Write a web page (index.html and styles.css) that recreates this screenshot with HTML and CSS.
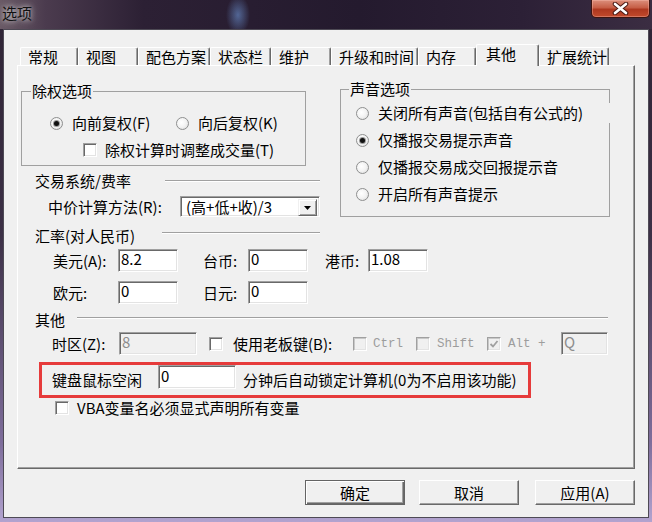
FILE: index.html
```html
<!DOCTYPE html>
<html lang="zh-CN">
<head>
    <meta charset="UTF-8">
    <meta name="viewport" content="width=device-width, initial-scale=1.0">
    <title>选项</title>
    <link rel="stylesheet" href="styles.css">
</head>
<body>
    <div class="window">
        <div class="titlebar">
            <span class="title">选项</span>
            <button type="button" class="close-btn">
                <svg width="17" height="13" viewBox="0 0 17 13">
                    <path d="M3 2 L14 11 M14 2 L3 11" stroke="#4a1a14" stroke-width="4.6" stroke-linecap="round"/>
                    <path d="M3 2 L14 11 M14 2 L3 11" stroke="#fff" stroke-width="2.6" stroke-linecap="round"/>
                </svg>
            </button>
        </div>
        <div class="client">
            <div class="tabs">
                <div class="tab w58">常规</div>
                <div class="tab w60">视图</div>
                <div class="tab w72">配色方案</div>
                <div class="tab w61">状态栏</div>
                <div class="tab w60">维护</div>
                <div class="tab w87">升级和时间</div>
                <div class="tab w58">内存</div>
                <div class="tab w63 active">其他</div>
                <div class="tab w70">扩展统计</div>
            </div>

            <div class="panel">
                <div class="top-area">
                    <div class="left-col">
                        <fieldset class="group group-xr">
                            <legend>除权选项</legend>
                            <div class="opt-row xr-radios">
                                <label class="opt opt-fwd"><span class="radio on"></span>向前复权(F)</label>
                                <label class="opt"><span class="radio"></span>向后复权(K)</label>
                            </div>
                            <div class="opt-row xr-check">
                                <label class="opt"><span class="check"></span>除权计算时调整成交量(T)</label>
                            </div>
                        </fieldset>

                        <div class="sep sep-fee">
                            <span class="sep-label">交易系统/费率</span>
                            <span class="sep-line"></span>
                        </div>

                        <div class="field-row mid-row">
                            <span class="lbl">中价计算方法(R):</span>
                            <div class="combo">
                                <span class="combo-text">(高+低+收)/3</span>
                                <span class="combo-btn">
                                    <svg width="7" height="4" viewBox="0 0 7 4"><path d="M0 0 H7 L3.5 4 Z" fill="#000"/></svg>
                                </span>
                            </div>
                        </div>
                    </div>

                    <fieldset class="group group-sound">
                        <legend>声音选项</legend>
                        <label class="opt sound-opt first"><span class="radio"></span>关闭所有声音(包括自有公式的)</label>
                        <label class="opt sound-opt"><span class="radio on"></span>仅播报交易提示声音</label>
                        <label class="opt sound-opt"><span class="radio"></span>仅播报交易成交回报提示音</label>
                        <label class="opt sound-opt"><span class="radio"></span>开启所有声音提示</label>
                    </fieldset>
                </div>

                <div class="sep sep-rate">
                    <span class="sep-label">汇率(对人民币)</span>
                    <span class="sep-line"></span>
                </div>
                <div class="cur-row row-usd">
                    <div class="cur cur-1"><span class="lbl">美元(A):</span><input class="edit" type="text" value="8.2"></div>
                    <div class="cur cur-2"><span class="lbl">台币:</span><input class="edit" type="text" value="0"></div>
                    <div class="cur cur-3"><span class="lbl">港币:</span><input class="edit" type="text" value="1.08"></div>
                </div>
                <div class="cur-row row-eur">
                    <div class="cur cur-1"><span class="lbl">欧元:</span><input class="edit" type="text" value="0"></div>
                    <div class="cur cur-2"><span class="lbl">日元:</span><input class="edit" type="text" value="0"></div>
                </div>

                <div class="sep sep-other">
                    <span class="sep-label">其他</span>
                    <span class="sep-line"></span>
                </div>
                <div class="tz-row">
                    <span class="lbl tz-lbl">时区(Z):</span>
                    <input class="edit tz-edit" type="text" value="8" disabled>
                    <label class="opt boss"><span class="check"></span>使用老板键(B):</label>
                    <label class="opt key key-ctrl"><span class="check off"></span><span class="mono">Ctrl</span></label>
                    <label class="opt key key-shift"><span class="check off"></span><span class="mono">Shift</span></label>
                    <label class="opt key key-alt">
                        <span class="check off">
                            <svg width="10" height="10" viewBox="0 0 10 10"><path d="M1.5 5 L4 7.5 L8.5 2" stroke="#a0a0a0" stroke-width="1.8" fill="none"/></svg>
                        </span><span class="mono">Alt +</span>
                    </label>
                    <input class="edit hot-edit" type="text" value="Q" disabled>
                </div>

                <div class="lock-row">
                    <span class="lbl lock-lbl">键盘鼠标空闲</span>
                    <input class="edit lock-edit" type="text" value="0">
                    <span class="lock-tip">分钟后自动锁定计算机(0为不启用该功能)</span>
                </div>
                <label class="opt vba"><span class="check"></span>VBA变量名必须显式声明所有变量</label>
            </div>

            <div class="buttons">
                <button type="button" class="btn btn-default">确定</button>
                <button type="button" class="btn">取消</button>
                <button type="button" class="btn btn-apply">应用(A)</button>
            </div>
        </div>
    </div>
</body>
</html>
```

FILE: styles.css
```css
* {
    box-sizing: border-box;
}
body {
    margin: 0;
    width: 652px;
    height: 522px;
    overflow: hidden;
    font-family: "Noto Sans CJK SC", "Noto Sans", sans-serif;
    font-size: 15px;
    line-height: 18px;
    color: #000;
}
.window {
    width: 652px;
    height: 522px;
    display: flex;
    flex-direction: column;
    background: linear-gradient(180deg, #2e2334 0%, #3c3046 45%, #7f6e9c 85%, #b2a3cf 100%);
}

/* title bar */
.titlebar {
    height: 29px;
    display: flex;
    align-items: flex-start;
    background:
        radial-gradient(ellipse 12px 20px at 238px 15px, rgba(110, 150, 215, 0.6), rgba(110, 150, 215, 0) 100%),
        linear-gradient(90deg, #6a5a66 0%, #4b3b4e 7%, #2c2034 22%, #241a2e 55%, #2c2036 80%, #3b2d42 100%);
}
.title {
    margin: 4px 0 0 2px;
    color: #111;
    text-shadow: 0 0 5px rgba(235, 235, 235, 0.9), 0 0 10px rgba(200, 200, 200, 0.7);
}
.close-btn {
    margin-left: auto;
    margin-right: 2px;
    width: 59px;
    height: 18px;
    padding: 0;
    border: 1px solid #3d1410;
    border-top: none;
    border-radius: 0 0 5px 5px;
    background: linear-gradient(180deg, #dc8f7c 0%, #c65e46 45%, #ae3820 55%, #c24a2c 100%);
    box-shadow: inset 0 0 0 1px rgba(255, 200, 190, 0.35);
    display: flex;
    align-items: center;
    justify-content: center;
}

/* dialog client */
.client {
    flex: 1;
    margin: 0 3px 4px;
    background: #f0f0f0;
    border: 1px solid #4e4a55;
}
.tabs {
    display: flex;
    align-items: flex-end;
    height: 21px;
    margin: 14px 0 0 16px;
}
.tab {
    height: 18px;
    padding-left: 7px;
    line-height: 17px;
    white-space: nowrap;
    background: #f0f0f0;
    border-top: 1px solid #fff;
    border-left: 1px solid #fff;
    border-right: 1px solid #696969;
    border-radius: 2px 2px 0 0;
    box-shadow: inset -1px 0 #a0a0a0;
}
.tab.active {
    height: 22px;
    padding-left: 9px;
    margin-bottom: -1px;
    position: relative;
    z-index: 1;
}
.w58 { width: 58px; }
.w60 { width: 60px; }
.w61 { width: 61px; }
.w63 { width: 63px; }
.w70 { width: 70px; }
.w72 { width: 72px; }
.w87 { width: 87px; }

.panel {
    width: 618px;
    height: 404px;
    margin-left: 13px;
    background: #f0f0f0;
    border: 1px solid;
    border-color: #fff #696969 #696969 #fff;
    box-shadow: inset -1px -1px #a0a0a0;
}

/* group boxes */
.top-area {
    display: flex;
    align-items: flex-start;
    margin: 14px 0 0 3px;
}
.left-col {
    width: 299px;
    margin-top: 2px;
}
.group {
    margin: 0;
    padding: 0;
    border: 1px solid #a0a0a0;
    min-inline-size: 0;
}
.group legend {
    padding: 0 1px;
    line-height: 18px;
}
.group-xr {
    width: 285px;
    padding-bottom: 5px;
}
.group-xr legend {
    margin-left: 9px;
}
.group-sound {
    width: 270px;
    margin-left: 20px;
    padding-bottom: 12px;
}
.group-sound legend {
    margin-left: 8px;
}

.opt-row {
    display: flex;
    height: 20px;
}
.opt {
    display: flex;
    align-items: center;
    height: 20px;
    white-space: nowrap;
}
.xr-radios {
    margin-top: 13px;
    padding-left: 28px;
}
.opt-fwd {
    width: 126px;
}
.xr-check {
    margin-top: 7px;
    padding-left: 61px;
}
.sound-opt {
    margin-top: 7px;
    padding-left: 15px;
}
.sound-opt.first {
    margin-top: 5px;
    margin-right: -2px;
    background: #f0f0f0;
}

.radio {
    flex: none;
    width: 13px;
    height: 13px;
    margin-right: 9px;
    border-radius: 50%;
    border: 1px solid #8e8f8f;
    background: radial-gradient(circle at 40% 40%, #fff 0%, #f3f3f3 50%, #d6d6d6 100%);
    display: flex;
    align-items: center;
    justify-content: center;
}
.radio.on::after {
    content: "";
    width: 5px;
    height: 5px;
    border-radius: 50%;
    background: #111;
    box-shadow: 0 0 0 1px #9a9a9a;
}
.check {
    flex: none;
    width: 14px;
    height: 14px;
    margin-right: 8px;
    background: #fff;
    border: 1px solid;
    border-color: #a0a0a0 #fff #fff #a0a0a0;
    box-shadow: inset 1px 1px #696969, inset -1px -1px #e3e3e3;
    display: flex;
    align-items: center;
    justify-content: center;
}
.check.off {
    background: #f0f0f0;
    box-shadow: inset 1px 1px #c8c8c8, inset -1px -1px #e3e3e3;
}

/* separators */
.sep {
    display: flex;
    align-items: flex-start;
    height: 18px;
}
.sep-line {
    flex: 1;
    height: 2px;
    border-top: 1px solid #a0a0a0;
    border-bottom: 1px solid #fff;
}
.sep-fee {
    margin-top: 6px;
}
.sep-fee .sep-label {
    margin-left: 14px;
    width: 130px;
}
.sep-fee .sep-line {
    margin-top: 8px;
}
.sep-rate {
    width: 302px;
    margin-top: 10px;
}
.sep-rate .sep-label {
    margin-left: 17px;
    width: 127px;
}
.sep-rate .sep-line {
    margin-top: 5px;
}
.sep-other {
    width: 590px;
    margin-top: 7px;
}
.sep-other .sep-label {
    margin-left: 17px;
    width: 42px;
}
.sep-other .sep-line {
    margin-top: 6px;
}

/* fields */
.field-row {
    display: flex;
    align-items: center;
}
.mid-row {
    margin: 6px 0 0 27px;
    height: 21px;
}
.mid-row .lbl {
    width: 132px;
}
.combo {
    width: 140px;
    height: 21px;
    padding: 2px;
    display: flex;
    background: #fff;
    border: 1px solid;
    border-color: #a0a0a0 #fff #fff #a0a0a0;
    box-shadow: inset 1px 1px #696969, inset -1px -1px #e3e3e3;
}
.combo-text {
    flex: 1;
    padding-left: 3px;
    line-height: 16px;
    white-space: nowrap;
}
.combo-btn {
    width: 19px;
    height: 17px;
    background: #f0f0f0;
    border: 1px solid;
    border-color: #f0f0f0 #696969 #696969 #f0f0f0;
    box-shadow: inset 1px 1px #fff, inset -1px -1px #a0a0a0;
    display: flex;
    align-items: center;
    justify-content: center;
}

.edit {
    width: 60px;
    height: 23px;
    margin: 0;
    padding: 0 2px 4px;
    font-family: inherit;
    font-size: 15px;
    line-height: 17px;
    color: #000;
    background: #fff;
    border: 1px solid;
    border-color: #a0a0a0 #fff #fff #a0a0a0;
    box-shadow: inset 1px 1px #696969, inset -1px -1px #e3e3e3;
    outline: none;
}
.edit:disabled {
    color: #8d8d8d;
    background: #f0f0f0;
}

.cur-row {
    display: flex;
    height: 23px;
    padding-left: 35px;
}
.row-usd {
    margin-top: 4px;
}
.row-eur {
    margin-top: 9px;
}
.cur {
    display: flex;
    align-items: center;
}
.cur-1 { width: 150px; }
.cur-1 .lbl { width: 65px; }
.cur-2 { width: 122px; }
.cur-2 .lbl { width: 45px; }
.cur-3 .lbl { width: 43px; }

.tz-row {
    display: flex;
    align-items: center;
    height: 23px;
    margin-top: 3px;
    padding-left: 34px;
}
.tz-lbl {
    width: 67px;
}
.tz-edit {
    width: 78px;
}
.boss {
    width: 144px;
    margin-left: 12px;
}
.boss .check {
    margin-right: 10px;
}
.key {
    color: #9d9d9d;
}
.key-ctrl { width: 63px; }
.key-ctrl .check { margin-right: 6px; }
.key-shift { width: 71px; }
.key-shift .check { margin-right: 7px; }
.key-alt { width: 74px; }
.key-alt .check { margin-right: 7px; }
.mono {
    font-family: "Liberation Mono", monospace;
    font-size: 12.5px;
}
.hot-edit {
    width: 47px;
}

/* highlighted row */
.lock-row {
    display: flex;
    align-items: center;
    width: 492px;
    height: 36px;
    margin: 7px 0 0 21px;
    padding-left: 10px;
    border: 3px solid #e63b3b;
}
.lock-lbl {
    width: 106px;
}
.lock-edit {
    width: 78px;
    height: 24px;
    align-self: flex-start;
}
.lock-tip {
    margin-left: 7px;
    white-space: nowrap;
}
.vba {
    margin-left: 37px;
}

/* buttons */
.buttons {
    display: flex;
    justify-content: flex-end;
    margin-top: 11px;
    padding-right: 13px;
}
.btn {
    width: 100px;
    height: 25px;
    margin-left: 14px;
    padding: 0;
    font-family: inherit;
    font-size: 15px;
    line-height: 21px;
    color: #000;
    background: #f0f0f0;
    border: 1px solid;
    border-color: #fff #696969 #696969 #fff;
    box-shadow: inset -1px -1px #a0a0a0;
}
.btn-default {
    border-color: #646464;
    box-shadow: inset 1px 1px #fff, inset -1px -1px #696969, inset -2px -2px #a0a0a0;
}
.btn-apply {
    margin-left: 16px;
}
```
